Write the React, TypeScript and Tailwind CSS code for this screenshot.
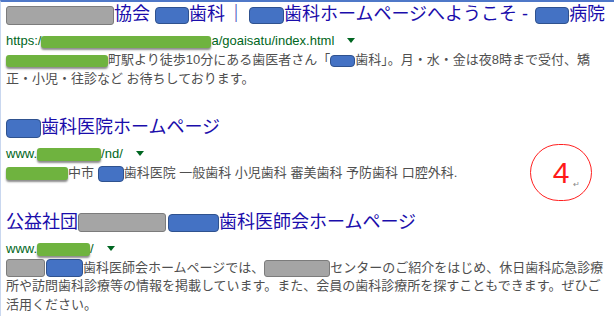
import React from 'react';

// redaction blocks painted over the original screenshot
function Gray({ w, h, className = '' }: { w: string; h: string; className?: string }) {
  return (
    <span
      className={`inline-block ${w} ${h} rounded-[3px] bg-[#a5a5a5] border border-[#7c7c7c] align-middle ${className}`}
    />
  );
}

function Blue({ w, h, className = '' }: { w: string; h: string; className?: string }) {
  return (
    <span
      className={`inline-block ${w} ${h} rounded-[4px] bg-[#4472c4] border border-[#2f528f] align-middle ${className}`}
    />
  );
}

function Green({ w, h, className = '' }: { w: string; h: string; className?: string }) {
  return (
    <span
      className={`inline-block ${w} ${h} rounded-[3px] bg-[#6fb33f] shadow-[0_2px_2px_rgba(0,0,0,0.45)] align-middle ${className}`}
    />
  );
}

function Caret() {
  return (
    <span className="inline-block ml-[13px] align-middle relative -top-[1px] w-0 h-0 border-l-[4px] border-r-[4px] border-t-[5px] border-l-transparent border-r-transparent border-t-[#006621]" />
  );
}

export default function App() {
  return (
    <div
      className="relative w-[614px] h-[316px] overflow-hidden bg-white border-t-2 border-t-[#4f78c8] border-l border-l-[#c9d7ef] pl-[5px] text-[#4f4f4f]"
      style={{ fontFamily: '"Liberation Sans", "Noto Sans CJK JP", sans-serif' }}
    >
      {/* result 1 */}
      <div className="whitespace-nowrap">
        <div className="text-[18px] leading-[24px] text-[#1a0dab]">
          <Gray w="w-[108px]" h="h-[19px]" />
          協会 <Blue w="w-[34px]" h="h-[17px]" />
          歯科<span className="mx-[2px]">｜</span>
          <Blue w="w-[35px]" h="h-[17px]" className="ml-[2px]" />
          歯科ホームページへようこそ - <Blue w="w-[34px]" h="h-[17px]" className="ml-[2px]" />
          病院
        </div>
        <div className="mt-[5px] text-[13px] leading-[20px] text-[#006621]">
          https:/<Green w="w-[170px]" h="h-[12px]" />
          a/goaisatu/index.html
          <Caret />
        </div>
        <div className="text-[13px] leading-[18.5px]">
          <Green w="w-[102px]" h="h-[12px]" />
          町駅より徒歩10分にある歯医者さん「<Blue w="w-[25px]" h="h-[12px]" />
          歯科」。月・水・金は夜8時まで受付、矯
          <br />
          正・小児・往診など お待ちしております。
        </div>
      </div>

      {/* result 2 */}
      <div className="mt-[27px] whitespace-nowrap">
        <div className="text-[18px] leading-[24px] text-[#1a0dab]">
          <Blue w="w-[35px]" h="h-[19px]" />
          歯科医院ホームページ
        </div>
        <div className="mt-[5px] text-[13px] leading-[20px] text-[#006621]">
          www.<Green w="w-[64px]" h="h-[13px]" />
          /nd/
          <Caret />
        </div>
        <div className="text-[13px] leading-[18.5px]">
          <Green w="w-[62px]" h="h-[13px]" />
          中市 <Blue w="w-[26px]" h="h-[16px]" />
          歯科医院 一般歯科 小児歯科 審美歯科 予防歯科 口腔外科.
        </div>
      </div>

      {/* result 3 */}
      <div className="mt-[27px] whitespace-nowrap">
        <div className="text-[18px] leading-[24px] text-[#1a0dab]">
          公益社団<Gray w="w-[88px]" h="h-[19px]" />
          <Blue w="w-[51px]" h="h-[18px]" className="ml-[2px]" />
          歯科医師会ホームページ
        </div>
        <div className="mt-[5px] text-[13px] leading-[20px] text-[#006621]">
          www.<Green w="w-[53px]" h="h-[13px]" />
          /
          <Caret />
        </div>
        <div className="text-[13px] leading-[18.5px]">
          <Gray w="w-[39px]" h="h-[18px]" />
          <Blue w="w-[37px]" h="h-[18px]" className="ml-[1px]" />
          歯科医師会ホームページでは、<Gray w="w-[66px]" h="h-[17px]" />
          センターのご紹介をはじめ、休日歯科応急診療
          <br />
          所や訪問歯科診療等の情報を掲載しています。また、会員の歯科診療所を探すこともできます。ぜひご
          <br />
          活用ください。
        </div>
      </div>

      {/* red annotation */}
      <div className="absolute left-[529px] top-[142px] w-[62px] h-[57px] rounded-full border-[1.5px] border-[#ff2020] flex items-center justify-center">
        <span className="text-[30px] leading-none text-[#ff1a1a]">4</span>
        <span className="absolute left-[42px] top-[34px] text-[8px] text-[#888]">↵</span>
      </div>
    </div>
  );
}
